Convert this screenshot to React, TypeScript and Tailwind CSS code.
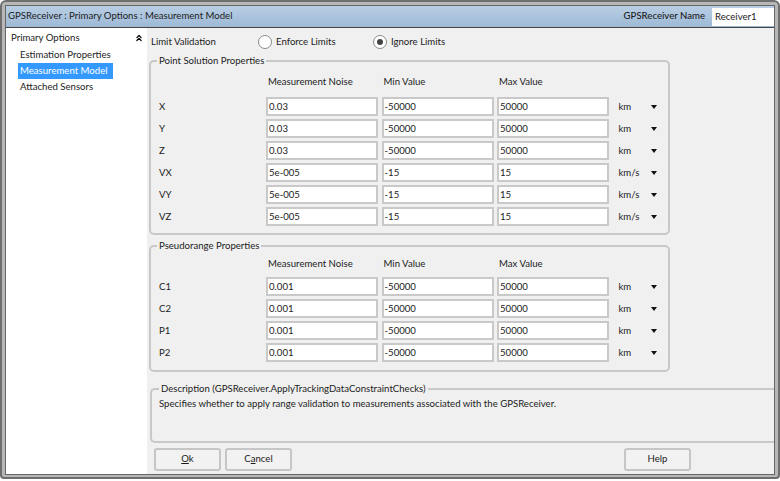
import React from 'react'
import { ChevronsUp } from 'lucide-react'

const pointRows = [
  { name: 'X', noise: '0.03', min: '-50000', max: '50000', unit: 'km' },
  { name: 'Y', noise: '0.03', min: '-50000', max: '50000', unit: 'km' },
  { name: 'Z', noise: '0.03', min: '-50000', max: '50000', unit: 'km' },
  { name: 'VX', noise: '5e-005', min: '-15', max: '15', unit: 'km/s' },
  { name: 'VY', noise: '5e-005', min: '-15', max: '15', unit: 'km/s' },
  { name: 'VZ', noise: '5e-005', min: '-15', max: '15', unit: 'km/s' },
]

const pseudoRows = [
  { name: 'C1', noise: '0.001', min: '-50000', max: '50000', unit: 'km' },
  { name: 'C2', noise: '0.001', min: '-50000', max: '50000', unit: 'km' },
  { name: 'P1', noise: '0.001', min: '-50000', max: '50000', unit: 'km' },
  { name: 'P2', noise: '0.001', min: '-50000', max: '50000', unit: 'km' },
]

type Row = (typeof pointRows)[number]

function Field({ value }: { value: string }) {
  return (
    <div className="h-[19px] border-2 border-[#c9c9c9] bg-white pl-[1px] leading-[15px] text-[#222]">
      {value}
    </div>
  )
}

function Radio({ label, checked, className = '' }: { label: string; checked?: boolean; className?: string }) {
  return (
    <div className={`flex items-center gap-[4px] ${className}`}>
      <div className="flex h-[14px] w-[14px] items-center justify-center rounded-full border border-[#8a8a8a] bg-white">
        {checked && <div className="h-[6px] w-[6px] rounded-full bg-[#444]" />}
      </div>
      <span>{label}</span>
    </div>
  )
}

function PropertyGroup({ title, rows, className, headClass }: { title: string; rows: Row[]; className: string; headClass: string }) {
  return (
    <fieldset className={`ml-[2px] w-[521px] rounded-[5px] border-2 border-[#c8c8c8] pl-[8px] ${className}`}>
      <legend className="ml-[-2px] px-[2px] leading-[14px]">{title}</legend>
      <div className={`grid grid-cols-[103.5px_112px_112px_112px_35px_auto] gap-x-[3.5px] gap-y-[3px] ${headClass}`}>
        <div />
        <div className="pl-[2px] leading-[14px]">Measurement Noise</div>
        <div className="pl-[2px] leading-[14px]">Min Value</div>
        <div className="pl-[2px] leading-[14px]">Max Value</div>
        <div />
        <div />
        {rows.map((row) => (
          <React.Fragment key={row.name}>
            <div className="leading-[19px]">{row.name}</div>
            <Field value={row.noise} />
            <Field value={row.min} />
            <Field value={row.max} />
            <div className="pl-[6px] leading-[19px]">{row.unit}</div>
            <div className="flex items-center">
              <div className="h-0 w-0 border-x-[3px] border-t-[4px] border-x-transparent border-t-[#111]" />
            </div>
          </React.Fragment>
        ))}
      </div>
    </fieldset>
  )
}

function Button({ children, className = '' }: { children: React.ReactNode; className?: string }) {
  return (
    <div className={`flex h-[23px] w-[67px] items-center justify-center rounded-[3px] border-2 border-[#c6c6c6] bg-[#f2f2f2] ${className}`}>
      {children}
    </div>
  )
}

export default function App() {
  return (
    <div
      className="h-[481px] w-[780px] overflow-hidden bg-white text-[9.6px] text-[#1c1c1c]"
      style={{ fontFamily: 'Lato, "Open Sans", sans-serif' }}
    >
      <div className="flex h-[479px] flex-col rounded-t-[6px] rounded-b-[4px] border-2 border-[#6e6e6e] bg-[#b7b7b7] px-[3px] pt-[3px] pb-[2px]">
        <div className="flex min-h-0 flex-1 flex-col border border-[#666]">
          <div className="flex h-[22px] shrink-0 items-center justify-between border-b border-[#444] bg-gradient-to-b from-[#b9cee4] to-[#9db9d6] pl-[2px]">
            <span>GPSReceiver : Primary Options : Measurement Model</span>
            <div className="flex items-center gap-[7px]">
              <span className="font-medium">GPSReceiver Name</span>
              <div className="h-[18px] w-[62px] bg-white pl-[3px] leading-[18px]">Receiver1</div>
            </div>
          </div>
          <div className="flex min-h-0 flex-1">
            <aside className="w-[141px] shrink-0 bg-white pl-[5px] pt-[1px]">
              <div className="flex items-center justify-between pr-[3px] leading-[17px]">
                <span>Primary Options</span>
                <ChevronsUp size={10} strokeWidth={3} className="text-black" />
              </div>
              <ul className="mt-[1px] pl-[7px]">
                <li className="pl-[2px] leading-[16px]">Estimation Properties</li>
                <li className="w-[95px] bg-[#3399ff] pl-[2px] leading-[16px] text-white">Measurement Model</li>
                <li className="pl-[2px] leading-[16px]">Attached Sensors</li>
              </ul>
            </aside>
            <main className="min-w-0 flex-1 bg-[#f0f0f0]">
              <div className="flex h-[26px] items-center pl-[4px] pt-[2px]">
                <span className="w-[107px]">Limit Validation</span>
                <Radio label="Enforce Limits" className="w-[115px]" />
                <Radio label="Ignore Limits" checked />
              </div>
              <PropertyGroup title="Point Solution Properties" rows={pointRows} className="h-[181px]" headClass="pt-[7px] [&>div:nth-child(2)]:pb-[5px]" />
              <PropertyGroup title="Pseudorange Properties" rows={pseudoRows} className="mt-[4px] h-[133px]" headClass="pt-[4px] [&>div:nth-child(2)]:pb-[3px]" />
              <fieldset className="mt-[10px] ml-[3px] h-[61px] w-[624px] rounded-l-[5px] border-y-2 border-l-2 border-[#c8c8c8] pl-[7px]">
                <legend className="ml-[0px] px-[2px] leading-[14px]">Description (GPSReceiver.ApplyTrackingDataConstraintChecks)</legend>
                <p className="pt-[1px] leading-[14px]">Specifies whether to apply range validation to measurements associated with the GPSReceiver.</p>
              </fieldset>
              <div className="mt-[5px] flex pl-[7px]">
                <Button><span><u>O</u>k</span></Button>
                <Button className="ml-[4px]"><span>C<u>a</u>ncel</span></Button>
                <Button className="ml-[332px]">Help</Button>
              </div>
            </main>
          </div>
        </div>
      </div>
    </div>
  )
}
